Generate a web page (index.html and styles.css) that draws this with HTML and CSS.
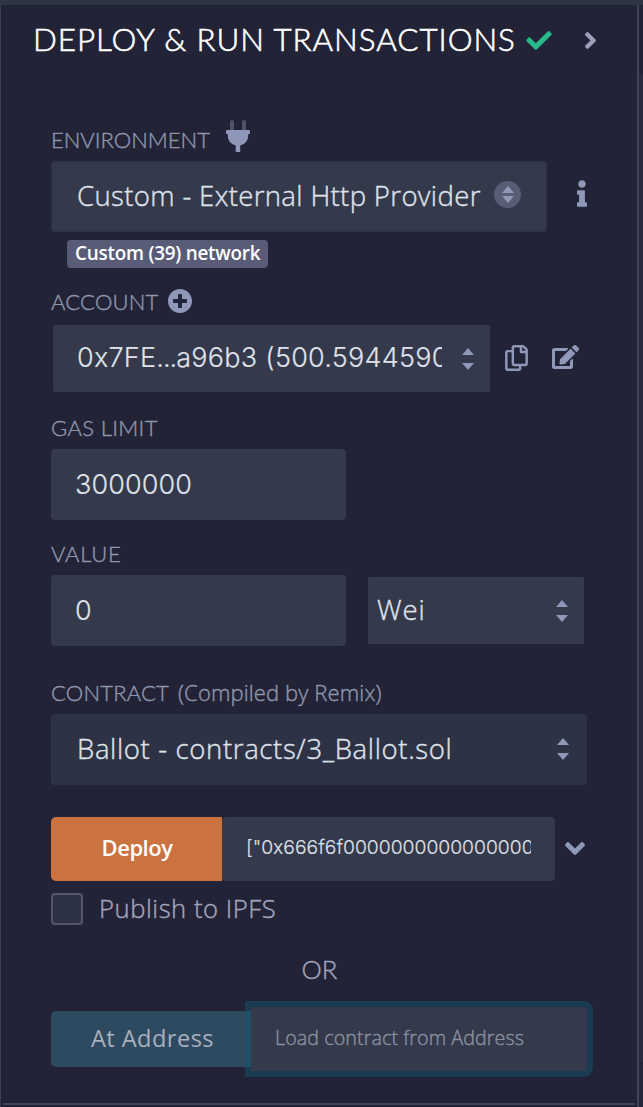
FILE: index.html
```html
<!DOCTYPE html>
<html lang="en">
<head>
<meta charset="utf-8">
<title>Deploy &amp; run transactions</title>
<link rel="stylesheet" href="styles.css">
</head>
<body>
<div class="app">
  <main class="panel">
    <header class="header">
      <h1 class="title">DEPLOY &amp; RUN TRANSACTIONS</h1>
      <svg class="check" viewBox="0 65 512 382"><path d="M173.898 439.404l-166.4-166.4c-9.997-9.997-9.997-26.206 0-36.204l36.203-36.204c9.997-9.998 26.207-9.998 36.204 0L192 312.69 432.095 72.596c9.997-9.997 26.207-9.997 36.204 0l36.203 36.204c9.997 9.997 9.997 26.206 0 36.204l-294.4 294.401c-9.998 9.997-26.207 9.997-36.204-.001z"/></svg>
      <svg class="angle" viewBox="24 96 208 320"><path d="M224.3 273l-136 136c-9.4 9.4-24.6 9.4-33.9 0l-22.6-22.6c-9.4-9.4-9.4-24.6 0-33.9l96.4-96.4-96.4-96.4c-9.4-9.4-9.4-24.6 0-33.9L54.3 103c9.4-9.4 24.6-9.4 33.9 0l136 136c9.5 9.4 9.5 24.6.1 34z"/></svg>
    </header>

    <div class="label env-label"><span class="t-env">ENVIRONMENT</span>
      <svg class="plug" viewBox="0 0 24 32"><path class="dim" d="M4 10V2a2 2 0 0 1 4 0v8zM16 10V2a2 2 0 0 1 4 0v8z"/><path d="M1 10h22a1 1 0 0 1 1 1v2a1 1 0 0 1-1 1h-.8v1.500a10 10 0 0 1-8 10V32h-4.500v-6.500a10 10 0 0 1-8-10V14H1a1 1 0 0 1-1-1v-2a1 1 0 0 1 1-1z"/></svg>
    </div>
    <div class="row">
      <div class="field env"><span class="t-provider">Custom - External Http Provider</span>
        <span class="knob"><svg viewBox="0 0 12 17"><path d="M6 0l6 7H0zM0 10h12L6 17z"/></svg></span>
      </div>
      <svg class="info" viewBox="0 0 192 512"><path d="M20 424.229h20V279.771H20c-11.046 0-20-8.954-20-20V212c0-11.046 8.954-20 20-20h112c11.046 0 20 8.954 20 20v212.229h20c11.046 0 20 8.954 20 20V492c0 11.046-8.954 20-20 20H20c-11.046 0-20-8.954-20-20v-47.771c0-11.046 8.954-20 20-20zM96 0C56.235 0 24 32.235 24 72s32.235 72 72 72 72-32.235 72-72S135.764 0 96 0z"/></svg>
    </div>
    <div class="badge">Custom (39) network</div>

    <div class="label acc-label"><span class="t-acc">ACCOUNT</span>
      <svg class="plus" viewBox="8 8 496 496"><path d="M256 8C119 8 8 119 8 256s111 248 248 248 248-111 248-248S393 8 256 8zm144 276c0 6.600-5.400 12-12 12h-92v92c0 6.600-5.400 12-12 12h-56c-6.600 0-12-5.400-12-12v-92h-92c-6.600 0-12-5.400-12-12v-56c0-6.600 5.400-12 12-12h92v-92c0-6.600 5.400-12 12-12h56c6.600 0 12 5.400 12 12v92h92c6.600 0 12 5.400 12 12v56z"/></svg>
    </div>
    <div class="row">
      <div class="field account"><span class="clip t-address">0x7FE<span class="dots">...</span>a96b3 (500.5944590</span>
        <svg class="carets" viewBox="0 0 12 22"><path d="M6 0l6 7H0zM0 15h12l-6 7z"/></svg>
      </div>
      <svg class="copy" viewBox="0 0 448 512"><path d="M433.941 65.941l-51.882-51.882A48 48 0 0 0 348.118 0H176c-26.510 0-48 21.490-48 48v48H48c-26.510 0-48 21.490-48 48v320c0 26.510 21.490 48 48 48h224c26.510 0 48-21.490 48-48v-48h80c26.510 0 48-21.490 48-48V99.882a48 48 0 0 0-14.059-33.941zM266 464H54a6 6 0 0 1-6-6V150a6 6 0 0 1 6-6h74v224c0 26.510 21.490 48 48 48h96v42a6 6 0 0 1-6 6zm128-96H182a6 6 0 0 1-6-6V54a6 6 0 0 1 6-6h106v88c0 13.255 10.745 24 24 24h88v202a6 6 0 0 1-6 6zm6-256h-64V48h9.632c1.591 0 3.117.632 4.243 1.757l48.368 48.368a6 6 0 0 1 1.757 4.243V112z"/></svg>
      <svg class="edit" viewBox="0 0 576 512"><path d="M402.600 83.200l90.200 90.200c3.800 3.800 3.800 10 0 13.800L274.400 405.600l-92.800 10.300c-12.400 1.400-22.900-9.100-21.500-21.500l10.300-92.800L388.800 83.200c3.800-3.800 10-3.800 13.800 0zm162-22.900l-48.800-48.800c-15.200-15.200-39.900-15.200-55.200 0l-35.400 35.400c-3.800 3.800-3.800 10 0 13.800l90.200 90.200c3.800 3.800 10 3.800 13.800 0l35.400-35.400c15.200-15.300 15.200-40 0-55.200zM384 346.200V448H64V128h229.800c3.200 0 6.200-1.300 8.500-3.500l40-40c7.600-7.600 2.200-20.500-8.500-20.500H48C21.500 64 0 85.500 0 112v352c0 26.500 21.500 48 48 48h352c26.500 0 48-21.500 48-48V306.200c0-10.700-12.900-16-20.500-8.500l-40 40c-2.200 2.300-3.500 5.300-3.500 8.500z"/></svg>
    </div>

    <div class="label gas-label"><span class="t-gas">GAS LIMIT</span></div>
    <div class="field amount">3000000</div>

    <div class="label value-label"><span class="t-value">VALUE</span></div>
    <div class="row">
      <div class="field amount">0</div>
      <div class="field unit"><span class="t-wei">Wei</span>
        <svg class="carets" viewBox="0 0 12 22"><path d="M6 0l6 7H0zM0 15h12l-6 7z"/></svg>
      </div>
    </div>

    <div class="label contract-label"><span class="t-contract">CONTRACT</span><span class="t-compiled">(Compiled by Remix)</span></div>
    <div class="field contract"><span class="t-ballot">Ballot - contracts/3_Ballot.sol</span>
      <svg class="carets" viewBox="0 0 12 22"><path d="M6 0l6 7H0zM0 15h12l-6 7z"/></svg>
    </div>

    <div class="row deploy-row">
      <div class="deploy">Deploy</div>
      <div class="field args"><span class="clip t-args">["0x666f6f0000000000000000</span></div>
      <svg class="chevron" viewBox="0 152 320 208"><path d="M143 352.300L7 216.300c-9.400-9.400-9.400-24.600 0-33.900l22.600-22.600c9.400-9.400 24.600-9.400 33.900 0l96.400 96.400 96.400-96.400c9.400-9.400 24.600-9.400 33.900 0l22.600 22.600c9.400 9.400 9.400 24.600 0 33.900l-136 136c-9.200 9.400-24.400 9.400-33.800 0z"/></svg>
    </div>
    <div class="row publish"><span class="checkbox"></span><span class="t-publish">Publish to IPFS</span></div>
    <div class="or">OR</div>
    <div class="row at-row">
      <div class="at">At Address</div>
      <div class="field load">Load contract from Address</div>
    </div>
    <div class="divider"></div>
  </main>
  <aside class="side"></aside>
</div>
</body>
</html>
```
FILE: styles.css
```css
* { box-sizing: border-box; }
body {
  margin: 0;
  background: #222336;
  color: #dfe1ea;
  font-family: "Open Sans", sans-serif;
  font-weight: 300;
  -webkit-text-stroke: 0.4px currentColor;
  white-space: nowrap;
}
svg { display: block; flex: none; fill: #8f98b8; -webkit-text-stroke: 0; }
.app {
  display: flex;
  height: 1107px;
  overflow: hidden;
  border-top: 5px solid #2f3543;
}
.panel {
  width: 639px;
  padding-left: 50px;
  border-left: 1px solid #3a3f51;
  border-right: 2px solid #3f4455;
}
.side {
  width: 4px;
  background: linear-gradient(#222336 69px, #282a3f 69px, #282a3f 1057px, #1f2131 1057px, #1f2131 1059px, #25273b 1059px);
}
.row { display: flex; align-items: center; }

.header {
  display: flex;
  align-items: center;
  height: 40px;
  margin: 14px 0 0 -19px;
}
.title {
  margin: 0;
  width: 494px;
  padding-left: 1px;
  color: #fff;
  font-family: Lato, sans-serif;
  font-size: 31.4px;
  font-weight: 300;
  line-height: 41px;
  letter-spacing: 0.95px;
  -webkit-text-stroke: 0.6px currentColor;
}
.check { width: 26px; height: 19px; fill: #28ba8b; margin-top: 2px; }
.angle { width: 11px; height: 17px; margin: 2px 0 0 33px; fill: #9b9fba; }

.label {
  display: flex;
  height: 30px;
  line-height: 30px;
  font-family: Lato, sans-serif;
  font-size: 22px;
  color: #8f96ab;
}
.env-label { margin: 66px 0 6px; }
.t-env { width: 175px; letter-spacing: 0; }
.plug { width: 24px; height: 32px; margin-top: -5px; }
.plug .dim { fill: #4e536a; }
.acc-label { margin: 19px 0 8px; }
.t-acc { width: 117px; letter-spacing: 0.2px; }
.plus { width: 24px; height: 24px; margin-top: 2px; }
.gas-label { margin: 21px 0 6px; }
.t-gas { letter-spacing: 0.35px; }
.value-label { margin: 19px 0 6px; }
.t-value { letter-spacing: 0.7px; }
.contract-label { margin: 32px 0 6px; }
.t-contract { width: 127px; letter-spacing: 0.2px; }
.t-compiled { font-family: "Open Sans", sans-serif; letter-spacing: 0.12px; line-height: 28px; }

.field {
  display: flex;
  align-items: center;
  background: #34394b;
  border-radius: 4px;
  font-size: 27.5px;
  line-height: 40px;
}
.field > span { margin-top: -2px; }
.clip { overflow: hidden; }
.env {
  width: 496px;
  height: 71px;
  padding-left: 24px;
  border: 2px solid #2f3446;
}
.t-provider { width: 417px; letter-spacing: 0.36px; }
.field > .knob {
  display: flex;
  align-items: center;
  justify-content: center;
  width: 27px;
  height: 27px;
  margin-top: -5px;
  border-radius: 50%;
  background: #595e77;
}
.knob svg { width: 12px; height: 17px; }
.info { width: 10px; height: 27px; margin: -6px 0 0 30px; }
.badge {
  width: 201px;
  height: 28px;
  margin: 8px 0 0 16px;
  padding-left: 8px;
  border-radius: 4px;
  background: #595c76;
  color: #fff;
  font-size: 18.9px;
  font-weight: 600;
  line-height: 26px;
  letter-spacing: -0.24px;
  -webkit-text-stroke: 0;
}

.t-address, .t-args, .amount {
  font-family: Inter, sans-serif;
  font-feature-settings: "calt" 0;
  -webkit-text-stroke: 0.15px currentColor;
}
.account {
  width: 437px;
  height: 67px;
  margin-left: 2px;
  padding-left: 24px;
  border-radius: 2px;
}
.t-address { width: 365px; margin-right: 20px; font-size: 27px; letter-spacing: 0.25px; }
.dots { letter-spacing: -1px; }
.carets { width: 12px; height: 22px; }
.copy { width: 23px; height: 26px; margin-left: 15px; margin-top: -2px; }
.edit { width: 27px; height: 24px; margin-left: 24px; margin-top: -3px; }

.amount {
  width: 295px;
  height: 71px;
  padding: 1px 0 0 24px;
  font-size: 27px;
  letter-spacing: 0.1px;
}
.unit {
  width: 216px;
  height: 67px;
  margin-left: 22px;
  padding-left: 9px;
  border-radius: 2px;
}
.t-wei { width: 179px; letter-spacing: 0.9px; }
.contract {
  width: 536px;
  height: 71px;
  padding-left: 26px;
  background: #2d3244;
}
.t-ballot { width: 480px; letter-spacing: 0.65px; }
.contract .carets { margin-top: -2px; }

.deploy-row { margin-top: 32px; }
.deploy {
  width: 171px;
  height: 64px;
  padding-left: 1px;
  border-radius: 5px 0 0 5px;
  background: #cb7340;
  color: #fff;
  font-size: 22px;
  font-weight: 600;
  line-height: 60px;
  letter-spacing: -0.5px;
  text-align: center;
  -webkit-text-stroke: 0;
}
.args { width: 333px; height: 64px; padding-left: 24px; }
.field > .t-args { width: 285px; margin-top: -4px; font-size: 19.3px; }
.chevron { width: 20px; height: 13px; margin-left: 10px; margin-top: -2px; }

.publish { margin-top: 12px; height: 32px; color: #a2a3bd; font-size: 25.6px; }
.checkbox {
  width: 32px;
  height: 32px;
  border: 2px solid #52556b;
  border-radius: 4px;
  background: #2d3244;
}
.t-publish { margin-left: 16px; line-height: 32px; letter-spacing: 0.55px; }
.or {
  width: 536px;
  height: 30px;
  margin-top: 29px;
  padding-left: 1px;
  color: #a2a3bd;
  font-family: Lato, sans-serif;
  font-size: 25.6px;
  line-height: 31px;
  letter-spacing: 0.2px;
  text-align: center;
}
.at-row { margin-top: 23px; }
.at {
  width: 200px;
  height: 56px;
  padding-left: 3px;
  border-radius: 5px 0 0 5px;
  background: #2d4a61;
  color: #a9afbb;
  font-size: 23.6px;
  font-weight: 400;
  line-height: 54px;
  letter-spacing: 0.45px;
  text-align: center;
  -webkit-text-stroke: 0;
}
.load {
  width: 336px;
  height: 64px;
  padding: 0 0 3px 24px;
  border-radius: 0 4px 4px 0;
  color: #8a91a0;
  font-size: 19.7px;
  letter-spacing: 0.08px;
  box-shadow: 0 0 0 6px rgba(15, 85, 110, 0.5);
}
.divider { height: 2px; margin: 32px 2px 0 -48px; background: #3f4357; }
```
